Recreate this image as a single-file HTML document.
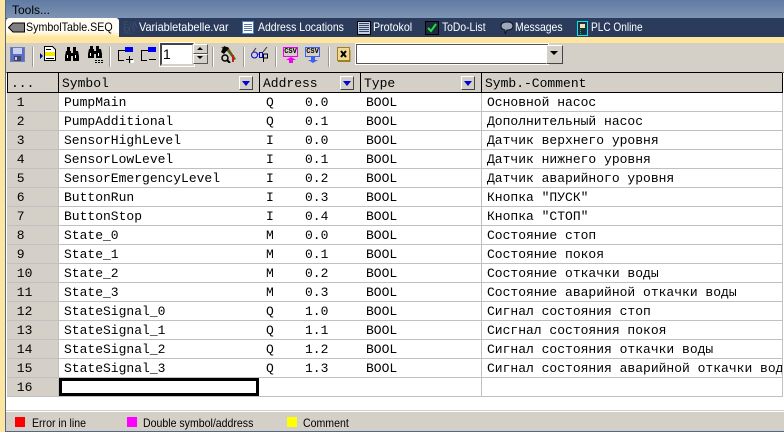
<!DOCTYPE html>
<html><head><meta charset="utf-8"><style>
html,body{margin:0;padding:0;background:#fff}
#p{position:relative;width:784px;height:432px;overflow:hidden;background:#fff;font-family:"Liberation Sans",sans-serif}
#p div,#p svg{position:absolute}
.t{color:#fff;font-size:12px;top:20px;line-height:15px;white-space:nowrap;transform-origin:left}
.sep{top:47px;width:1px;height:20px;background:#9c9a94;border-right:1px solid #fff}
.r{left:7px;width:775px;height:19px}
.c{top:0;height:18px;border-right:1px solid #c0c0c0;border-bottom:1px solid #c0c0c0;font:13px/20px "Liberation Mono","Noto Sans CJK SC",monospace;color:#000;white-space:pre;overflow:hidden;background:#fff}
.c0{left:0;width:49px;padding-left:2px;background:#d4d0c8;}
.c1{left:52px;width:196px;padding-left:5px}
.c2{left:253px;width:96px;padding-left:6px}
.c3{left:354px;width:115px;padding-left:5px}
.c4{left:475px;width:295px;padding-left:5px}
.h{top:73px;height:19px;background:#d4d0c8;border-right:1px solid #000;border-bottom:1px solid #000;font:13px/21px "Liberation Mono",monospace;white-space:pre;padding-left:3px}
.b{top:3px;width:12px;height:12px;background:#d4d0c8;border:1px solid;border-color:#fff #444 #444 #fff}
.b:after{content:"";position:absolute;left:2px;top:4px;border-left:4px solid transparent;border-right:4px solid transparent;border-top:5px solid #0000d8}
.l{top:416px;font-size:12px;line-height:15px;color:#000;white-space:nowrap;transform-origin:left;transform:scaleX(.88)}
.s{top:417px;width:10px;height:10px}
.csv{top:47px;width:13px;height:8px;background:#d4d0c8;font:bold 7px/8px "Liberation Mono",monospace;text-align:center;overflow:hidden;color:#000}
</style></head><body><div id="p">
<div style="left:0;top:0;width:784px;height:18px;background:linear-gradient(#5f7aa3,#7f94b3)"></div>
<div style="left:12px;top:2px;font-size:12px;line-height:16px;color:#000">Tools...</div>
<div style="left:0;top:0;width:6px;height:432px;background:#ffe6a0"></div>
<div style="left:5px;top:0;width:1px;height:432px;background:#51678c"></div>
<div style="left:6px;top:18px;width:778px;height:19px;background:#2a3b5c"></div>
<div style="left:6px;top:37px;width:778px;height:6px;background:#ffe6a0"></div>
<div style="left:6px;top:18px;width:113px;height:19px;background:linear-gradient(#fffdf4 70%,#ffe6a0);border-radius:3px 3px 0 0"></div>
<svg style="left:8px;top:22px" width="17" height="11"><path d="M.5 5.500L5 1h11.500v9H5z" fill="#808080" stroke="#000"/></svg>
<div class="t" style="left:26px;color:#000;transform:scaleX(.89)">SymbolTable.SEQ</div>
<div style="left:123px;top:22px;font:9px/6px 'Liberation Sans',sans-serif;color:#3d4e6e;width:14px">E/A<br>M?</div>
<div class="t" style="left:139px;transform:scaleX(.91)">Variabletabelle.var</div>
<svg style="left:242px;top:21px" width="13" height="14"><rect x=".5" y=".5" width="11" height="12" fill="#fff" stroke="#4d7fc0"/><path d="M2 3.500h8M2 5.500h8M2 7.500h8M2 9.500h8" stroke="#5a78a8"/></svg>
<div class="t" style="left:258px;transform:scaleX(.87)">Address Locations</div>
<svg style="left:357px;top:21px" width="14" height="14"><rect x=".5" y=".5" width="13" height="13" fill="#c4cfe0" stroke="#000"/><path d="M2 2.500h10M2 4.500h10M2 6.500h10M2 8.500h10M2 10.500h10" stroke="#34466a"/></svg>
<div class="t" style="left:373px;transform:scaleX(.89)">Protokol</div>
<svg style="left:425px;top:21px" width="14" height="14"><rect x=".5" y=".5" width="13" height="13" fill="#1b2a3e" stroke="#000"/><path d="M3 7l3 3 5-7" fill="none" stroke="#22e03a" stroke-width="2"/></svg>
<div class="t" style="left:442px;transform:scaleX(.86)">ToDo-List</div>
<svg style="left:500px;top:21px" width="14" height="15"><path d="M1 5q0-4 6-4t6 4-6 4l-2 4 0-4Q1 8 1 5z" fill="#9aa8c0" stroke="#111"/></svg>
<div class="t" style="left:515px;transform:scaleX(.87)">Messages</div>
<svg style="left:577px;top:21px" width="11" height="15"><rect x=".5" y=".5" width="10" height="14" fill="#1c3040" stroke="#00e8f0"/><rect x="3" y="3" width="5" height="4" fill="#f4e4b0"/><path d="M3.500 8v5" stroke="#22c040" stroke-dasharray="1 1"/></svg>
<div class="t" style="left:591px;transform:scaleX(.84)">PLC Online</div>
<div style="left:6px;top:43px;width:778px;height:29px;background:#d4d0c8"></div>
<div style="left:6px;top:72px;width:778px;height:1px;background:#6b6b68"></div>
<svg style="left:10px;top:47px" width="15" height="15"><rect x=".5" y=".5" width="14" height="14" fill="#5a6cc8" stroke="#7080a8"/><rect x="3" y="1" width="9" height="6" fill="#c8d0f0"/><rect x="4" y="9" width="7" height="5" fill="#3c4670"/><rect x="5" y="10" width="2" height="3" fill="#d4d0c8"/></svg>
<div class="sep" style="left:32px"></div>
<svg style="left:40px;top:46px" width="17" height="16"><path d="M0 7l3 3-3 3z" fill="#000090"/><path d="M4.500.5h8l3 3v11h-11z" fill="#fff" stroke="#000"/><rect x="5" y="6" width="10" height="4" fill="#f8e800"/><path d="M6 3.500h5M6 12.500h8" stroke="#000"/></svg>
<svg style="left:64px;top:47px" width="16" height="15"><path d="M3 0h3v4H3zM9 0h3v4H9zM2 4h5v2h2V4h5l1 5v5H9V9H7v5H1V9z" fill="#000"/><path d="M3.500 8v3M11.500 8v3" stroke="#fff"/></svg>
<svg style="left:87px;top:46px" width="17" height="17"><path d="M3 0h3v3H3zM9 0h3v3H9zM2 3h5v2h2V3h5l1 5v4H9V8H7v4H1V8z" fill="#000"/><path d="M3.500 7v3M11.500 7v3" stroke="#fff"/><path d="M8 14.500h2M11 14.500h2M14 14.500h2M8 16.500h2M11 16.500h2M14 16.500h2" stroke="#000"/></svg>
<div class="sep" style="left:109px"></div>
<svg style="left:118px;top:47px" width="17" height="16"><rect x="7" y="0" width="8" height="5" fill="#0000f0"/><path d="M7 3.500H.5v10H6" fill="none" stroke="#000"/><path d="M8 12.500h7M11.500 9v7" stroke="#000"/><rect x="13" y="13" width="3" height="3" fill="#fff"/></svg>
<svg style="left:141px;top:47px" width="17" height="16"><rect x="7" y="0" width="8" height="5" fill="#0000f0"/><path d="M7 3.500H.5v10H6" fill="none" stroke="#000"/><path d="M8 12.500h7" stroke="#000"/></svg>
<div style="left:160px;top:43px;width:30px;height:19px;background:#fff;border:2px solid;border-color:#444 #d4d0c8 #d4d0c8 #444;outline:1px solid #fff;font-size:14px;line-height:19px;text-indent:1px">1</div>
<div style="left:193px;top:44px;width:13px;height:8px;background:#d4d0c8;border:1px solid;border-color:#fff #555 #555 #fff"></div>
<div style="left:193px;top:54px;width:13px;height:8px;background:#d4d0c8;border:1px solid;border-color:#fff #555 #555 #fff"></div>
<svg style="left:197px;top:46px" width="7" height="14"><path d="M3 1l3 3H0zM0 10h6l-3 3z" fill="#000"/></svg>
<div class="sep" style="left:212px"></div>
<svg style="left:220px;top:46px" width="17" height="17"><path d="M1 1l7 0 8 12-2 1-7-9-2 1z" fill="#5c5c10"/><path d="M4 0L1 6l3 2 5-6z" fill="#000"/><circle cx="5" cy="12" r="3" fill="none" stroke="#000" stroke-width="1.500"/><path d="M7 14l3 3" stroke="#000" stroke-width="2"/><path d="M13 9v7" stroke="#c02020" stroke-width="2"/></svg>
<div class="sep" style="left:243px"></div>
<svg style="left:251px;top:46px" width="18" height="17"><circle cx="3.500" cy="9" r="3" fill="none" stroke="#0000e0"/><path d="M8.500 6.500h3v5h-3z" fill="none" stroke="#0000e0"/><path d="M6.500 8h2M12 6l4-5M2 6l3-4" stroke="#333" fill="none"/><path d="M12.500 16V8h4v4h-4" fill="none" stroke="#000"/></svg>
<div class="sep" style="left:275px"></div>
<div class="csv" style="left:283px;border:1px solid #f000f0">CSV</div>
<svg style="left:286px;top:57px" width="10" height="6"><path d="M3 6V3H0l5-3 5 3H7v3z" fill="#f000f0"/></svg>
<div class="csv" style="left:305px;border:1px solid #4060f0">CSV</div>
<svg style="left:308px;top:57px" width="10" height="6"><path d="M3 0h4v3h3L5 6 0 3h3z" fill="#4060f0"/></svg>
<div class="sep" style="left:328px"></div>
<svg style="left:337px;top:47px" width="15" height="16"><rect x=".5" y=".5" width="12" height="13" fill="#f0d890" stroke="#a08020"/><path d="M1 14.500h12V3" fill="none" stroke="#a08020"/><path d="M4 4l5 6M9 4l-5 6" stroke="#000" stroke-width="2"/></svg>
<div style="left:356px;top:44px;width:190px;height:18px;background:#fff;border:1px solid #555;outline:1px solid #fff"></div>
<div style="left:546px;top:45px;width:15px;height:17px;background:#d4d0c8;border:1px solid;border-color:#fff #444 #444 #fff"></div>
<svg style="left:550px;top:51px" width="9" height="5"><path d="M0 0h8L4 4z" fill="#000"/></svg>

<div style="left:7px;top:72px;width:775px;height:1px;background:#000"></div>
<div style="left:7px;top:73px;width:1px;height:20px;background:#000"></div>
<div class="h" style="left:8px;width:47px">...</div>
<div class="h" style="left:59px;width:197px">Symbol<div class="b" style="left:180px"></div></div>
<div class="h" style="left:260px;width:97px">Address<div class="b" style="left:80px"></div></div>
<div class="h" style="left:361px;width:117px">Type<div class="b" style="left:100px"></div></div>
<div class="h" style="left:482px;width:297px">Symb.-Comment</div>

<div class="r" style="top:93px"><div class="c c0"> 1</div><div class="c c1">PumpMain</div><div class="c c2">Q    0.0</div><div class="c c3">BOOL</div><div class="c c4">Основной насос</div></div>
<div class="r" style="top:112px"><div class="c c0"> 2</div><div class="c c1">PumpAdditional</div><div class="c c2">Q    0.1</div><div class="c c3">BOOL</div><div class="c c4">Дополнительный насос</div></div>
<div class="r" style="top:131px"><div class="c c0"> 3</div><div class="c c1">SensorHighLevel</div><div class="c c2">I    0.0</div><div class="c c3">BOOL</div><div class="c c4">Датчик верхнего уровня</div></div>
<div class="r" style="top:150px"><div class="c c0"> 4</div><div class="c c1">SensorLowLevel</div><div class="c c2">I    0.1</div><div class="c c3">BOOL</div><div class="c c4">Датчик нижнего уровня</div></div>
<div class="r" style="top:169px"><div class="c c0"> 5</div><div class="c c1">SensorEmergencyLevel</div><div class="c c2">I    0.2</div><div class="c c3">BOOL</div><div class="c c4">Датчик аварийного уровня</div></div>
<div class="r" style="top:188px"><div class="c c0"> 6</div><div class="c c1">ButtonRun</div><div class="c c2">I    0.3</div><div class="c c3">BOOL</div><div class="c c4">Кнопка "ПУСК"</div></div>
<div class="r" style="top:207px"><div class="c c0"> 7</div><div class="c c1">ButtonStop</div><div class="c c2">I    0.4</div><div class="c c3">BOOL</div><div class="c c4">Кнопка "СТОП"</div></div>
<div class="r" style="top:226px"><div class="c c0"> 8</div><div class="c c1">State_0</div><div class="c c2">M    0.0</div><div class="c c3">BOOL</div><div class="c c4">Состояние стоп</div></div>
<div class="r" style="top:245px"><div class="c c0"> 9</div><div class="c c1">State_1</div><div class="c c2">M    0.1</div><div class="c c3">BOOL</div><div class="c c4">Состояние покоя</div></div>
<div class="r" style="top:264px"><div class="c c0"> 10</div><div class="c c1">State_2</div><div class="c c2">M    0.2</div><div class="c c3">BOOL</div><div class="c c4">Состояние откачки воды</div></div>
<div class="r" style="top:283px"><div class="c c0"> 11</div><div class="c c1">State_3</div><div class="c c2">M    0.3</div><div class="c c3">BOOL</div><div class="c c4">Состояние аварийной откачки воды</div></div>
<div class="r" style="top:302px"><div class="c c0"> 12</div><div class="c c1">StateSignal_0</div><div class="c c2">Q    1.0</div><div class="c c3">BOOL</div><div class="c c4">Сигнал состояния стоп</div></div>
<div class="r" style="top:321px"><div class="c c0"> 13</div><div class="c c1">StateSignal_1</div><div class="c c2">Q    1.1</div><div class="c c3">BOOL</div><div class="c c4">Сисгнал состояния покоя</div></div>
<div class="r" style="top:340px"><div class="c c0"> 14</div><div class="c c1">StateSignal_2</div><div class="c c2">Q    1.2</div><div class="c c3">BOOL</div><div class="c c4">Сигнал состояния откачки воды</div></div>
<div class="r" style="top:359px"><div class="c c0"> 15</div><div class="c c1">StateSignal_3</div><div class="c c2">Q    1.3</div><div class="c c3">BOOL</div><div class="c c4">Сигнал состояния аварийной откачки воды</div></div>
<div class="r" style="top:378px"><div class="c c0"> 16</div><div class="c c1"></div><div class="c c2"></div><div class="c c3"></div><div class="c c4"></div></div>
<div style="left:59px;top:378px;width:194px;height:12px;border:3px solid #000;background:#fff"></div>

<div style="left:6px;top:410px;width:778px;height:1px;background:#d4d0c8"></div>
<div style="left:6px;top:412px;width:778px;height:19px;background:#d4d0c8"></div>
<div style="left:6px;top:431px;width:778px;height:1px;background:#51678c"></div>
<div class="s" style="left:15px;background:#f00"></div><div class="l" style="left:32px">Error in line</div>
<div class="s" style="left:127px;background:#f0f"></div><div class="l" style="left:143px">Double symbol/address</div>
<div class="s" style="left:287px;background:#ff0"></div><div class="l" style="left:303px">Comment</div>
</div></body></html>
